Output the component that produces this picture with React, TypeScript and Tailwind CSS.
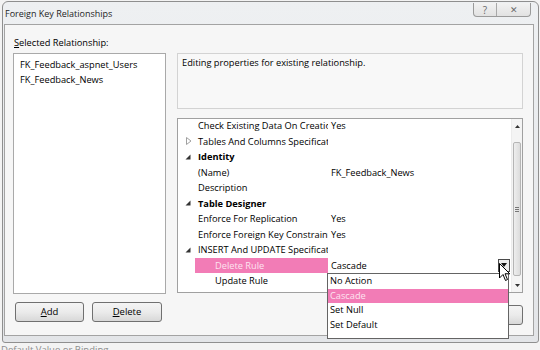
import React from "react";

type Row = {
  label: string;
  value?: string;
  exp?: "open" | "closed";
  bold?: boolean;
  nested?: boolean;
  hl?: boolean;
};

const rows: Row[] = [
  { label: "Check Existing Data On Creation Or Re-Enabling", value: "Yes" },
  { label: "Tables And Columns Specification", exp: "closed" },
  { label: "Identity", exp: "open", bold: true },
  { label: "(Name)", value: "FK_Feedback_News" },
  { label: "Description" },
  { label: "Table Designer", exp: "open", bold: true },
  { label: "Enforce For Replication", value: "Yes" },
  { label: "Enforce Foreign Key Constraint", value: "Yes" },
  { label: "INSERT And UPDATE Specification", exp: "open" },
  { label: "Delete Rule", value: "Cascade", nested: true, hl: true },
  { label: "Update Rule", nested: true },
];

function Expander({ exp }: { exp?: "open" | "closed" }) {
  if (exp === "closed")
    return (
      <svg width="6" height="8" viewBox="0 0 6 8" className="ml-[8px]">
        <path d="M0.5 0.5 L5 4 L0.5 7.5 Z" fill="none" stroke="#a0a0a0" strokeWidth="1" />
      </svg>
    );
  if (exp === "open")
    return (
      <svg width="6" height="6" viewBox="0 0 6 6" className="ml-[7px]">
        <path d="M5.5 0.5 L5.5 5.5 L0.5 5.5 Z" fill="#333" />
      </svg>
    );
  return null;
}

function Btn({ children, className }: { children: React.ReactNode; className?: string }) {
  return (
    <div
      className={
        "h-[20px] flex items-center justify-center rounded-[3px] border border-[#707070] bg-gradient-to-b from-[#f4f4f4] via-[#ebebeb] to-[#d8d8d8] text-[9.5px] " +
        (className ?? "")
      }
    >
      {children}
    </div>
  );
}

export default function App() {
  return (
    <div className="relative w-[540px] h-[350px] overflow-hidden bg-[#f3f3f3] font-['Open_Sans',sans-serif] text-[9.25px] text-black">
      {/* window */}
      <div className="ml-[2px] mt-[1px] w-[537px] h-[342px] flex flex-col rounded-t-[6px] rounded-b-[3px] border border-[#8f8f8f] bg-gradient-to-b from-[#eef0f2] to-[#e3e5e8]">
        {/* title bar */}
        <div className="h-[22px] flex items-start shrink-0">
          <span className="pl-[2px] pt-[6px] leading-[12px] text-[9px] text-[#1e1e1e]">Foreign Key Relationships</span>
          <div className="ml-auto mr-[7px] mt-[1px] flex h-[14px] rounded-b-[4px] border border-t-0 border-[#9a9a9a] bg-gradient-to-b from-[#f2f2f2] to-[#e2e2e2] text-[#6a6a6a]">
            <div className="w-[23px] flex items-center justify-center border-r border-[#a8a8a8] text-[10px] leading-none">?</div>
            <div className="w-[33px] flex items-center justify-center text-[9px] leading-none">✕</div>
          </div>
        </div>
        {/* client */}
        <div className="ml-[1px] mr-[4px] mb-[6px] flex-1 border border-[#a3a3a3] bg-[#f6f6f6] flex pl-[8px]">
          {/* left column */}
          <div className="w-[153px] flex flex-col">
            <div className="h-[28px] pt-[12px] pl-[1px] leading-[12px]">
              <span className="underline decoration-[0.5px] underline-offset-1">S</span>elected Relationship:
            </div>
            <div className="h-[241px] border border-[#a9a9a9] bg-white pt-[3px] pl-[6px] leading-[15px]">
              <div>FK_Feedback_aspnet_Users</div>
              <div>FK_Feedback_News</div>
            </div>
            <div className="mt-[8px] flex gap-[8px] pl-[2px]">
              <Btn className="w-[69px]">
                <span><span className="underline">A</span>dd</span>
              </Btn>
              <Btn className="w-[70px]">
                <span><span className="underline">D</span>elete</span>
              </Btn>
            </div>
          </div>
          {/* right column */}
          <div className="ml-[11px] w-[346px] flex flex-col">
            <div className="mt-[28px] h-[56px] border border-[#d3d3d3] bg-[#f8f8f8] pl-[4px] pt-[3px] leading-[12px]">
              Editing properties for existing relationship.
            </div>
            <div className="mt-[9px] h-[175px] border border-[#a0a0a0] bg-white flex overflow-hidden">
              <div className="flex-1 flex flex-col -mt-[1px]">
                {rows.map((r, i) => (
                  <div key={i} className="h-[15.5px] flex items-center leading-[15px] shrink-0">
                    <div className="w-[17px] h-full flex items-center shrink-0">
                      <Expander exp={r.exp} />
                    </div>
                    <div
                      className={
                        "w-[133px] h-full shrink-0 overflow-hidden whitespace-nowrap flex items-center " +
                        (r.hl ? "bg-[#f27cb6] text-[#fde4f0] " : "") +
                        (r.nested ? "pl-[20px] " : "pl-[3px] ") +
                        (r.bold ? "font-bold" : "")
                      }
                    >
                      {r.label}
                    </div>
                    <div
                      className={
                        "flex-1 h-full flex items-center pl-[3px] whitespace-nowrap " +
                        (r.hl ? "bg-white" : "")
                      }
                    >
                      {r.value ?? ""}
                      {r.hl && (
                        <div className="ml-auto mr-[1px] w-[12px] h-[13px] border border-[#4a4a4a] bg-[#ececec] flex items-center justify-center">
                          <svg width="6" height="4" viewBox="0 0 6 4">
                            <path d="M0 0 L6 0 L3 4 Z" fill="#111" />
                          </svg>
                        </div>
                      )}
                    </div>
                  </div>
                ))}
              </div>
              {/* scrollbar */}
              <div className="w-[11px] flex flex-col bg-[#f4f4f4] border-l border-[#ececec]">
                <div className="h-[14px] flex items-center justify-center">
                  <svg width="5" height="3" viewBox="0 0 5 3">
                    <path d="M0 3 L2.5 0 L5 3 Z" fill="#333" />
                  </svg>
                </div>
                <div className="mt-[9px] mx-[1px] h-[134px] rounded-[2px] border border-[#b5b5b5] bg-gradient-to-r from-[#eeeeee] to-[#dcdcdc] flex items-center justify-center">
                  <div className="flex flex-col gap-[1px]">
                    <div className="w-[4px] h-[1px] bg-[#777]" />
                    <div className="w-[4px] h-[1px] bg-[#777]" />
                    <div className="w-[4px] h-[1px] bg-[#777]" />
                  </div>
                </div>
                <div className="flex-1" />
                <div className="h-[13px] flex items-center justify-center">
                  <svg width="5" height="3" viewBox="0 0 5 3">
                    <path d="M0 0 L5 0 L2.5 3 Z" fill="#333" />
                  </svg>
                </div>
              </div>
            </div>
            <div className="mt-[12px] flex justify-end">
              <Btn className="w-[80px]">Close</Btn>
            </div>
          </div>
        </div>
      </div>
      <div className="mt-[1px] pl-[1px] leading-[12px] text-[9.5px] text-[#8d8d8d]">Default Value or Binding</div>

      {/* dropdown list overlay */}
      <div className="absolute left-[327px] top-[273px] w-[182px] h-[66px] border border-[#646464] bg-white leading-[14.5px]">
        <div className="h-[14.5px] pl-[2px]">No Action</div>
        <div className="h-[14.5px] pl-[2px] bg-[#f27cb6] text-[#fde4f0]">Cascade</div>
        <div className="h-[14.5px] pl-[2px]">Set Null</div>
        <div className="h-[14.5px] pl-[2px]">Set Default</div>
      </div>

      {/* mouse cursor */}
      <svg className="absolute left-[499px] top-[263px]" width="12" height="19" viewBox="0 0 12 19">
        <path d="M0.5 0.5 L0.5 15 L4 11.5 L6.5 17.5 L8.5 16.5 L6 10.8 L10.8 10.8 Z" fill="#fff" stroke="#000" strokeWidth="1" strokeLinejoin="round" />
      </svg>
    </div>
  );
}
